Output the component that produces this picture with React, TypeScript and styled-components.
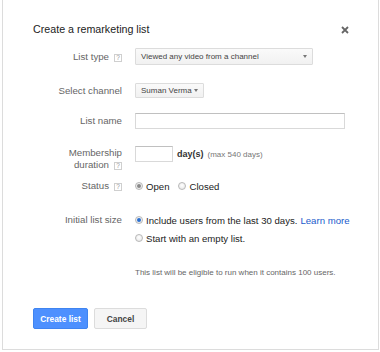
import React from "react";
import styled, { createGlobalStyle } from "styled-components";

const GlobalStyle = createGlobalStyle`
  html, body { margin: 0; padding: 0; background: #fff; }
  body { font-family: "Liberation Sans", Arial, sans-serif; color: #222; }
  * { box-sizing: border-box; }
`;

const Dialog = styled.div`
  margin: -1px 0 0 2px;
  width: 377px;
  height: 351px;
  border: 1px solid #dcdcdc;
  padding: 23px 0 0 30px;
  display: flex;
  flex-direction: column;
  background: #fff;
`;

const TitleBar = styled.div`
  display: flex;
  justify-content: space-between;
  align-items: center;
  height: 13px;
  padding-right: 29px;
`;

const Title = styled.div`
  font-size: 10.7px;
  line-height: 13px;
  color: #222;
`;

const Close = styled.button`
  border: 0;
  background: none;
  padding: 0;
  width: 8px;
  height: 8px;
  display: flex;
  cursor: pointer;
`;

const Row = styled.div<{ $top: number; $h?: number; $start?: boolean }>`
  display: grid;
  grid-template-columns: 89px auto;
  column-gap: 13px;
  align-items: ${(p) => (p.$start ? "start" : "center")};
  margin-top: ${(p) => p.$top}px;
  min-height: ${(p) => p.$h ?? 14}px;
`;

const Label = styled.div<{ $pad?: number }>`
  text-align: right;
  font-size: 9.7px;
  line-height: 12px;
  color: #666;
  padding-top: ${(p) => p.$pad ?? 0}px;
  white-space: nowrap;
`;

const Help = styled.span`
  display: inline-flex;
  align-items: center;
  justify-content: center;
  width: 8px;
  height: 8px;
  margin-left: 5px;
  border: 1px solid #cfcfcf;
  font-size: 6.5px;
  line-height: 1;
  color: #999;
  background: #fff;
`;

const Value = styled.div`
  display: flex;
  align-items: center;
  min-width: 0;
`;

const Select = styled.div<{ $w: number; $h: number }>`
  width: ${(p) => p.$w}px;
  height: ${(p) => p.$h}px;
  border: 1px solid #dcdcdc;
  border-radius: 1px;
  background: linear-gradient(#fafafa, #f1f1f1);
  display: flex;
  align-items: center;
  justify-content: space-between;
  padding: 0 5px 0 5px;
  font-size: 8px;
  color: #444;
`;

const Caret = styled.span`
  width: 0;
  height: 0;
  border-left: 2.5px solid transparent;
  border-right: 2.5px solid transparent;
  border-top: 3px solid #777;
`;

const TextInput = styled.div<{ $w: number }>`
  width: ${(p) => p.$w}px;
  height: 16px;
  border: 1px solid #d9d9d9;
  border-top-color: #c0c0c0;
  background: #fff;
`;

const Days = styled.span`
  margin-left: 4px;
  font-size: 9px;
  font-weight: bold;
  color: #333;
`;

const Hint = styled.span`
  margin-left: 4px;
  font-size: 8px;
  color: #777;
`;

const RadioLabel = styled.label<{ $gap?: number }>`
  display: inline-flex;
  align-items: center;
  font-size: 9.6px;
  color: #222;
  margin-right: ${(p) => p.$gap ?? 0}px;
  white-space: nowrap;
`;

const Dot = styled.span<{ $on?: boolean; $color?: string }>`
  width: 8px;
  height: 8px;
  border-radius: 50%;
  border: 1px solid #b8b8b8;
  background: radial-gradient(circle at 50% 40%, #fff, #e4e4e4);
  margin-right: 3px;
  display: inline-flex;
  align-items: center;
  justify-content: center;
  &::after {
    content: "";
    display: ${(p) => (p.$on ? "block" : "none")};
    width: 4px;
    height: 4px;
    border-radius: 50%;
    background: ${(p) => p.$color ?? "#888"};
  }
`;

const Link = styled.a`
  color: #1a5ccc;
  margin-left: 3px;
  text-decoration: none;
`;

const Note = styled.div`
  font-size: 8px;
  line-height: 10px;
  color: #666;
`;

const Buttons = styled.div`
  display: flex;
  gap: 6px;
  margin-top: 30px;
`;

const Button = styled.button<{ $primary?: boolean; $w: number }>`
  width: ${(p) => p.$w}px;
  height: 21px;
  padding: 0;
  border-radius: 2px;
  font-family: "Liberation Sans", Arial, sans-serif;
  font-size: 8.4px;
  font-weight: bold;
  border: 1px solid ${(p) => (p.$primary ? "#3f84f0" : "#dcdcdc")};
  background: ${(p) => (p.$primary ? "#4d90fe" : "#f5f5f5")};
  color: ${(p) => (p.$primary ? "#fff" : "#444")};
`;

export default function App() {
  return (
    <>
      <GlobalStyle />
      <Dialog>
        <TitleBar>
          <Title>Create a remarketing list</Title>
          <Close aria-label="Close">
            <svg width="8" height="8" viewBox="0 0 8 8">
              <path d="M1 1L7 7M7 1L1 7" stroke="#666" strokeWidth="1.8" />
            </svg>
          </Close>
        </TitleBar>

        <Row $top={12} $h={17}>
          <Label>
            List type<Help>?</Help>
          </Label>
          <Value>
            <Select $w={178} $h={17}>
              Viewed any video from a channel
              <Caret />
            </Select>
          </Value>
        </Row>

        <Row $top={18} $h={15}>
          <Label>Select channel</Label>
          <Value>
            <Select $w={69} $h={15}>
              Suman Verma
              <Caret />
            </Select>
          </Value>
        </Row>

        <Row $top={15} $h={16}>
          <Label>List name</Label>
          <Value>
            <TextInput $w={210} />
          </Value>
        </Row>

        <Row $top={17} $h={25} $start>
          <Label $pad={1}>
            Membership
            <br />
            duration<Help>?</Help>
          </Label>
          <Value>
            <TextInput $w={38} />
            <Days>day(s)</Days>
            <Hint>(max 540 days)</Hint>
          </Value>
        </Row>

        <Row $top={8} $h={14}>
          <Label>
            Status<Help>?</Help>
          </Label>
          <Value>
            <RadioLabel $gap={9}>
              <Dot $on />
              Open
            </RadioLabel>
            <RadioLabel>
              <Dot />
              Closed
            </RadioLabel>
          </Value>
        </Row>

        <Row $top={20} $h={14}>
          <Label>Initial list size</Label>
          <Value>
            <RadioLabel>
              <Dot $on $color="#2a6fd0" />
              Include users from the last 30 days.
              <Link href="#">Learn more</Link>
            </RadioLabel>
          </Value>
        </Row>

        <Row $top={4} $h={14}>
          <span />
          <Value>
            <RadioLabel>
              <Dot />
              Start with an empty list.
            </RadioLabel>
          </Value>
        </Row>

        <Row $top={23} $h={10}>
          <span />
          <Note>This list will be eligible to run when it contains 100 users.</Note>
        </Row>

        <Buttons>
          <Button $primary $w={55}>Create list</Button>
          <Button $w={53}>Cancel</Button>
        </Buttons>
      </Dialog>
    </>
  );
}
